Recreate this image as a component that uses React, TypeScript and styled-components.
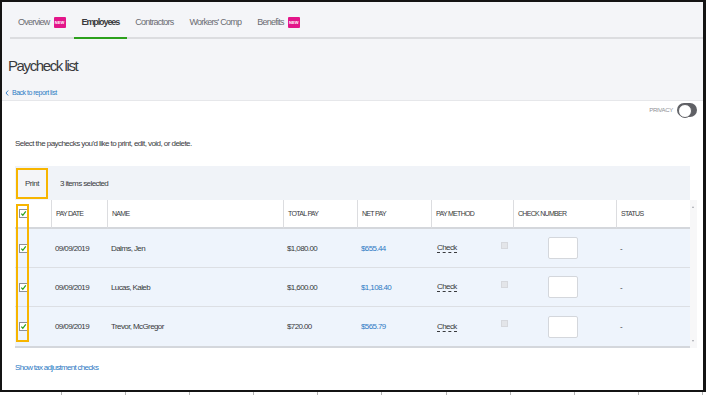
import React from 'react';
import styled, { createGlobalStyle } from 'styled-components';

const GlobalStyle = createGlobalStyle`
  * { box-sizing: border-box; }
  body {
    margin: 0;
    background: #fff;
    font-family: 'Liberation Sans', Arial, sans-serif;
    color: #393a3d;
    letter-spacing: -0.6px;
  }
`;

const Frame = styled.div`
  width: 706px;
  height: 392px;
  border: 2px solid #141414;
  border-right-width: 3px;
  display: flex;
  flex-direction: column;
  overflow: hidden;
  background: #fff;
`;

const Ruler = styled.div`
  width: 708px;
  height: 3px;
  background: repeating-linear-gradient(
    to right,
    transparent 0 61px,
    #b4b4b4 61px 62px,
    transparent 62px 64.1px
  );
`;

const Header = styled.div`
  height: 99px;
  background: #f4f5f8;
  border-bottom: 1px solid #e6e7ea;
  display: flex;
  flex-direction: column;
`;

const TabBar = styled.div`
  display: flex;
  height: 37px;
  margin-left: 8px;
  border-bottom: 2px solid #dcdde0;
`;

const Tab = styled.div<{ $active?: boolean }>`
  display: flex;
  align-items: center;
  gap: 4px;
  height: 37px;
  padding: 5px 8px 0;
  margin-bottom: -2px;
  border-bottom: 2px solid ${p => (p.$active ? '#2ca01c' : 'transparent')};
  font-size: 9px;
  font-weight: ${p => (p.$active ? 700 : 400)};
  letter-spacing: ${p => (p.$active ? '-1.1px' : '-0.75px')};
  color: ${p => (p.$active ? '#393a3d' : '#6b6c72')};
  white-space: nowrap;
`;

const NewBadge = styled.span`
  display: inline-flex;
  align-items: center;
  justify-content: center;
  width: 12px;
  height: 11px;
  background: #e3168a;
  color: #fff;
  font-size: 4px;
  font-weight: 700;
  letter-spacing: 0;
  border-radius: 1px;
`;

const Title = styled.h1`
  margin: 19px 0 0 6px;
  font-size: 15px;
  line-height: 16px;
  font-weight: 400;
  letter-spacing: -1.4px;
  color: #393a3d;
`;

const BackLink = styled.a`
  display: flex;
  align-items: center;
  gap: 3px;
  margin: 14px 0 0 3px;
  font-size: 7px;
  line-height: 9px;
  letter-spacing: -0.5px;
  color: #2f7bc4;
  text-decoration: none;
  svg {
    width: 4px;
    height: 6px;
  }
`;

const Body = styled.div`
  flex: 1;
  display: flex;
  flex-direction: column;
  padding: 0 6px 0 13px;
`;

const PrivacyRow = styled.div`
  display: flex;
  justify-content: flex-end;
  align-items: center;
  gap: 4px;
  height: 14px;
  margin-top: 2px;
  font-size: 6px;
  letter-spacing: -0.3px;
  color: #8d9096;
`;

const Toggle = styled.span`
  position: relative;
  width: 20px;
  height: 14px;
  border-radius: 7px;
  background: #5f6065;
  &::after {
    content: '';
    position: absolute;
    left: 1px;
    top: 1px;
    width: 12px;
    height: 12px;
    border-radius: 50%;
    background: #fff;
    border: 1px solid #5f6065;
  }
`;

const Intro = styled.p`
  margin: 22px 0 0;
  font-size: 8px;
  line-height: 10px;
  letter-spacing: -0.55px;
`;

const Toolbar = styled.div`
  display: flex;
  align-items: center;
  gap: 12px;
  height: 34px;
  margin: 17px 7px 0 0;
  padding-left: 1px;
  background: #f0f3f8;
  font-size: 8px;
`;

const PrintButton = styled.button`
  height: 31px;
  width: 32px;
  padding: 0;
  border: 2px solid #f7b500;
  background: #f4f5f8;
  font-family: inherit;
  font-size: 8px;
  letter-spacing: -0.5px;
  color: #393a3d;
`;

const TableWrap = styled.div`
  position: relative;
  display: flex;
`;

const Grid = styled.div`
  display: grid;
  grid-template-columns: 36px 56px 176px 74px 74px 82px 103px 74px;
  width: 675px;
  border-bottom: 2px solid #d4d7dc;
`;

const HeadCell = styled.div<{ $first?: boolean }>`
  display: flex;
  align-items: center;
  height: 29px;
  padding: 0 4px;
  background: #fff;
  border-bottom: 2px solid #d4d7dc;
  border-left: ${p => (p.$first ? 'none' : '1px solid #dcdde0')};
  font-size: 7px;
  letter-spacing: -0.7px;
  color: #393a3d;
  white-space: nowrap;
`;

const Cell = styled.div<{ $last?: boolean; $align?: string }>`
  display: flex;
  align-items: center;
  justify-content: ${p => p.$align || 'flex-start'};
  height: 39px;
  padding: 0 4px;
  background: #eef4fc;
  border-bottom: ${p => (p.$last ? 'none' : '1px solid #dcdfe4')};
  font-size: 8px;
  white-space: nowrap;
`;

const Box = styled.span`
  position: relative;
  width: 9px;
  height: 9px;
  border: 1px solid #8d9096;
  background: #fff;
  svg {
    position: absolute;
    left: 0;
    top: 0;
    width: 7px;
    height: 7px;
  }
`;

const Highlight = styled.div`
  position: absolute;
  left: 1px;
  top: 4px;
  width: 13px;
  height: 138px;
  border: 2px solid #f7b500;
  pointer-events: none;
`;

const Money = styled.span`
  color: #2f7bc4;
`;

const Method = styled.span`
  border-bottom: 1px dashed #393a3d;
  line-height: 9px;
  margin-left: 2px;
`;

const Disabled = styled.span`
  width: 7px;
  height: 7px;
  margin: -6px 1px 0 auto;
  background: #e3e5e9;
  border: 1px solid #d6d8dd;
`;

const NumberInput = styled.input`
  width: 30px;
  height: 22px;
  margin-left: -3px;
  border: 1px solid #d4d7dc;
  border-radius: 2px;
  background: #fff;
`;

const ScrollTrack = styled.div`
  position: relative;
  width: 7px;
  background: #f7f7f8;
  &::before,
  &::after {
    content: '';
    position: absolute;
    left: 2px;
    border-left: 1.5px solid transparent;
    border-right: 1.5px solid transparent;
  }
  &::before {
    top: 6px;
    border-bottom: 2px solid #a3a5aa;
  }
  &::after {
    bottom: 6px;
    border-top: 2px solid #a3a5aa;
  }
`;

const TaxLink = styled.a`
  margin-top: 15px;
  font-size: 8px;
  line-height: 10px;
  color: #2f7bc4;
  letter-spacing: -0.7px;
  text-decoration: none;
`;

const Check = () => (
  <Box>
    <svg viewBox="0 0 8 8">
      <path d="M1.5 4.2 L3.2 6 L6.6 1.6" fill="none" stroke="#2ca01c" strokeWidth="1.4" />
    </svg>
  </Box>
);

const paychecks = [
  { date: '09/09/2019', name: 'Dalms, Jen', total: '$1,080.00', net: '$655.44' },
  { date: '09/09/2019', name: 'Lucas, Kaleb', total: '$1,600.00', net: '$1,108.40' },
  { date: '09/09/2019', name: 'Trevor, McGregor', total: '$720.00', net: '$565.79' },
];

const columns = ['PAY DATE', 'NAME', 'TOTAL PAY', 'NET PAY', 'PAY METHOD', 'CHECK NUMBER', 'STATUS'];

const App = () => (
  <>
    <GlobalStyle />
    <Frame>
      <Header>
        <TabBar>
          <Tab>
            Overview <NewBadge>NEW</NewBadge>
          </Tab>
          <Tab $active>Employees</Tab>
          <Tab>Contractors</Tab>
          <Tab>Workers' Comp</Tab>
          <Tab>
            Benefits <NewBadge>NEW</NewBadge>
          </Tab>
        </TabBar>
        <Title>Paycheck list</Title>
        <BackLink href="#">
          <svg viewBox="0 0 4 6">
            <path d="M3.2 0.5 L1 3 L3.2 5.5" fill="none" stroke="#2f7bc4" strokeWidth="0.9" />
          </svg>
          Back to report list
        </BackLink>
      </Header>
      <Body>
        <PrivacyRow>
          PRIVACY
          <Toggle />
        </PrivacyRow>
        <Intro>Select the paychecks you'd like to print, edit, void, or delete.</Intro>
        <Toolbar>
          <PrintButton>Print</PrintButton>
          <span>3 items selected</span>
        </Toolbar>
        <TableWrap>
          <Grid>
            <HeadCell $first>
              <Check />
            </HeadCell>
            {columns.map(c => (
              <HeadCell key={c}>{c}</HeadCell>
            ))}
            {paychecks.map((p, i) => {
              const last = i === paychecks.length - 1;
              return (
                <React.Fragment key={p.name}>
                  <Cell $last={last}>
                    <Check />
                  </Cell>
                  <Cell $last={last}>{p.date}</Cell>
                  <Cell $last={last}>{p.name}</Cell>
                  <Cell $last={last}>{p.total}</Cell>
                  <Cell $last={last}>
                    <Money>{p.net}</Money>
                  </Cell>
                  <Cell $last={last}>
                    <Method>Check</Method>
                    <Disabled />
                  </Cell>
                  <Cell $last={last} $align="center">
                    <NumberInput />
                  </Cell>
                  <Cell $last={last}>-</Cell>
                </React.Fragment>
              );
            })}
          </Grid>
          <ScrollTrack />
          <Highlight />
        </TableWrap>
        <TaxLink href="#">Show tax adjustment checks</TaxLink>
      </Body>
    </Frame>
    <Ruler />
  </>
);

export default App;
